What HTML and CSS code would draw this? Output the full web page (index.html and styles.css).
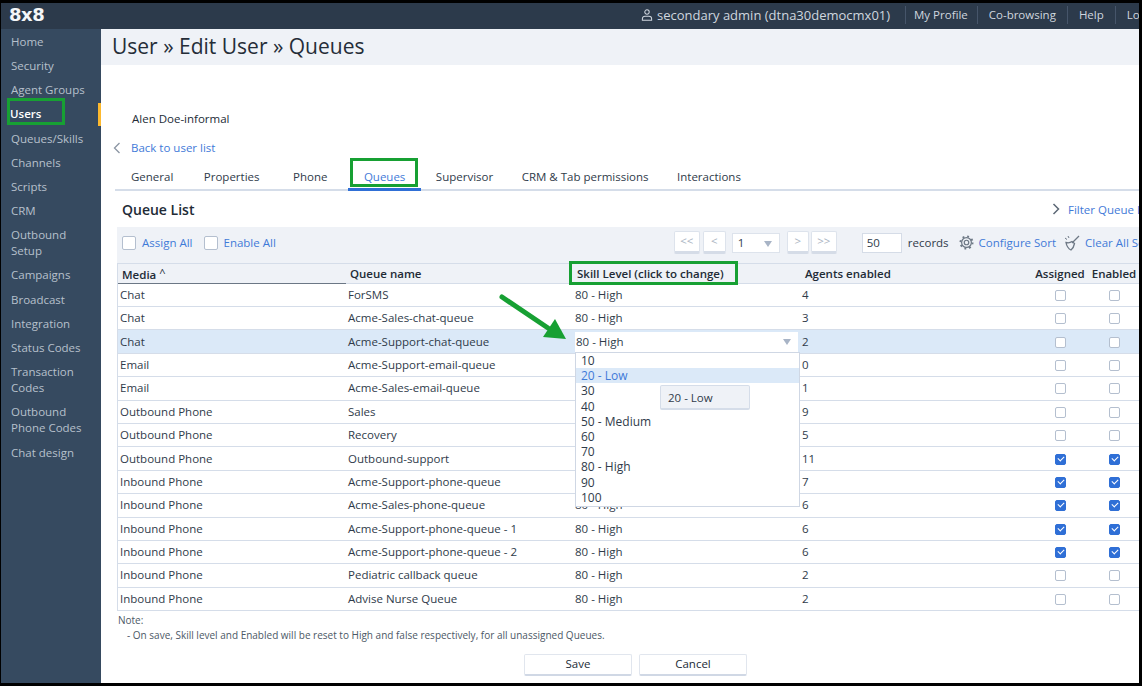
FILE: index.html
```html
<!DOCTYPE html>
<html lang="en">
<head>
  <meta charset="UTF-8" />
  <title>User » Edit User » Queues</title>
  <link rel="stylesheet" href="styles.css">
</head>
<body>
<div class="frame">
  <header class="topbar">
    <div class="logo">8x8</div>
    <div class="user">
      <svg class="user-icon" viewBox="0 0 14 14" width="12" height="14"><circle cx="7" cy="3.600" r="2.600" fill="none" stroke="#cfd6df" stroke-width="1.200"/><path d="M1.600 13v-1.600c0-1.800 1.400-3 3-3h4.800c1.600 0 3 1.200 3 3V13z" fill="none" stroke="#cfd6df" stroke-width="1.200"/></svg>
      <span>secondary admin (dtna30democmx01)</span>
    </div>
    <nav class="toplinks">
      <a>My Profile</a>
      <a>Co-browsing</a>
      <a>Help</a>
      <a>Logout</a>
    </nav>
  </header>

  <div class="layout">
    <aside class="sidebar">
      <a>Home</a>
      <a>Security</a>
      <a>Agent Groups</a>
      <a class="current">Users</a>
      <a>Queues/Skills</a>
      <a>Channels</a>
      <a>Scripts</a>
      <a>CRM</a>
      <a>Outbound<br>Setup</a>
      <a>Campaigns</a>
      <a>Broadcast</a>
      <a>Integration</a>
      <a>Status Codes</a>
      <a>Transaction<br>Codes</a>
      <a>Outbound<br>Phone Codes</a>
      <a>Chat design</a>
    </aside>

    <main class="content">
      <h1 class="page-title">User » Edit User » Queues</h1>
      <div class="user-name">Alen Doe-informal</div>
      <div class="back-row">
        <svg viewBox="0 0 8 12" width="8" height="12"><path d="M6.500 1 1.500 6l5 5" fill="none" stroke="#8b95a3" stroke-width="1.300"/></svg>
        <a class="link">Back to user list</a>
      </div>

      <div class="tabs">
        <a class="tab">General</a>
        <a class="tab">Properties</a>
        <a class="tab">Phone</a>
        <a class="tab active">Queues</a>
        <a class="tab">Supervisor</a>
        <a class="tab">CRM &amp; Tab permissions</a>
        <a class="tab">Interactions</a>
      </div>

      <div class="list-head">
        <h2>Queue List</h2>
        <div class="filter">
          <svg viewBox="0 0 8 12" width="8" height="12"><path d="M1.500 1l5 5-5 5" fill="none" stroke="#5d6876" stroke-width="1.500"/></svg>
          <a class="link">Filter Queue List</a>
        </div>
      </div>

      <div class="toolbar">
        <label class="check-all"><span class="box"></span><a class="link">Assign All</a></label>
        <label class="check-all"><span class="box"></span><a class="link">Enable All</a></label>
        <div class="pager">
          <span class="page-btn wide">&lt;&lt;</span>
          <span class="page-btn">&lt;</span>
          <span class="page-select">1<i class="caret"></i></span>
          <span class="page-btn next">&gt;</span>
          <span class="page-btn wide">&gt;&gt;</span>
        </div>
        <span class="records-input">50</span>
        <span class="records-label">records</span>
        <svg class="tool-icon" viewBox="0 0 16 16" width="15" height="15"><circle cx="8" cy="8" r="2.400" fill="none" stroke="#6d7885" stroke-width="1.300"/><circle cx="8" cy="8" r="5.200" fill="none" stroke="#6d7885" stroke-width="1.300"/><circle cx="8" cy="8" r="6.500" fill="none" stroke="#6d7885" stroke-width="2" stroke-dasharray="2 3.100"/></svg>
        <a class="link tool-link">Configure Sort</a>
        <svg class="tool-icon broom" viewBox="0 0 16 16" width="16" height="16"><path d="M15 1 8 8" stroke="#6d7885" stroke-width="1.300"/><path d="M8 6.500c-2 1.500-4 1.500-6 1 .5 3 2 6 5 7.500 2-1.500 3-4 3.500-6.500z" fill="none" stroke="#6d7885" stroke-width="1.300"/><path d="M1 3l2 1.500M4 1l1 2" stroke="#6d7885" stroke-width="1"/></svg>
        <a class="link tool-link">Clear All Sort</a>
      </div>

      <div class="grid-table">
        <div class="row head">
          <div class="cell sorted">Media <small>^</small></div>
          <div class="cell">Queue name</div>
          <div class="cell">Skill Level (click to change)</div>
          <div class="cell">Agents enabled</div>
          <div class="cell center">Assigned</div>
          <div class="cell center">Enabled</div>
        </div>
        <div class="row"><div class="cell">Chat</div><div class="cell">ForSMS</div><div class="cell">80 - High</div><div class="cell">4</div><div class="cell center"><span class="box"></span></div><div class="cell center"><span class="box"></span></div></div>
        <div class="row"><div class="cell">Chat</div><div class="cell">Acme-Sales-chat-queue</div><div class="cell">80 - High</div><div class="cell">3</div><div class="cell center"><span class="box"></span></div><div class="cell center"><span class="box"></span></div></div>
        <div class="row selected"><div class="cell">Chat</div><div class="cell">Acme-Support-chat-queue</div><div class="cell"><span class="skill-select">80 - High<i class="caret"></i></span></div><div class="cell">2</div><div class="cell center"><span class="box"></span></div><div class="cell center"><span class="box"></span></div></div>
        <div class="row"><div class="cell">Email</div><div class="cell">Acme-Support-email-queue</div><div class="cell"></div><div class="cell">0</div><div class="cell center"><span class="box"></span></div><div class="cell center"><span class="box"></span></div></div>
        <div class="row"><div class="cell">Email</div><div class="cell">Acme-Sales-email-queue</div><div class="cell"></div><div class="cell">1</div><div class="cell center"><span class="box"></span></div><div class="cell center"><span class="box"></span></div></div>
        <div class="row"><div class="cell">Outbound Phone</div><div class="cell">Sales</div><div class="cell"></div><div class="cell">9</div><div class="cell center"><span class="box"></span></div><div class="cell center"><span class="box"></span></div></div>
        <div class="row"><div class="cell">Outbound Phone</div><div class="cell">Recovery</div><div class="cell"></div><div class="cell">5</div><div class="cell center"><span class="box"></span></div><div class="cell center"><span class="box"></span></div></div>
        <div class="row"><div class="cell">Outbound Phone</div><div class="cell">Outbound-support</div><div class="cell"></div><div class="cell">11</div><div class="cell center"><span class="box on"></span></div><div class="cell center"><span class="box on"></span></div></div>
        <div class="row"><div class="cell">Inbound Phone</div><div class="cell">Acme-Support-phone-queue</div><div class="cell"></div><div class="cell">7</div><div class="cell center"><span class="box on"></span></div><div class="cell center"><span class="box on"></span></div></div>
        <div class="row"><div class="cell">Inbound Phone</div><div class="cell">Acme-Sales-phone-queue</div><div class="cell">80 - High</div><div class="cell">6</div><div class="cell center"><span class="box on"></span></div><div class="cell center"><span class="box on"></span></div></div>
        <div class="row"><div class="cell">Inbound Phone</div><div class="cell">Acme-Support-phone-queue - 1</div><div class="cell">80 - High</div><div class="cell">6</div><div class="cell center"><span class="box on"></span></div><div class="cell center"><span class="box on"></span></div></div>
        <div class="row"><div class="cell">Inbound Phone</div><div class="cell">Acme-Support-phone-queue - 2</div><div class="cell">80 - High</div><div class="cell">6</div><div class="cell center"><span class="box on"></span></div><div class="cell center"><span class="box on"></span></div></div>
        <div class="row"><div class="cell">Inbound Phone</div><div class="cell">Pediatric callback queue</div><div class="cell">80 - High</div><div class="cell">2</div><div class="cell center"><span class="box"></span></div><div class="cell center"><span class="box"></span></div></div>
        <div class="row"><div class="cell">Inbound Phone</div><div class="cell">Advise Nurse Queue</div><div class="cell">80 - High</div><div class="cell">2</div><div class="cell center"><span class="box"></span></div><div class="cell center"><span class="box"></span></div></div>

        <!-- open dropdown -->
        <ul class="skill-menu">
          <li>10</li>
          <li class="hover">20 - Low</li>
          <li>30</li>
          <li>40</li>
          <li>50 - Medium</li>
          <li>60</li>
          <li>70</li>
          <li>80 - High</li>
          <li>90</li>
          <li>100</li>
        </ul>
        <div class="tip">20 - Low</div>
      </div>

      <div class="note">
        <div>Note:</div>
        <div class="note-line">- On save, Skill level and Enabled will be reset to High and false respectively, for all unassigned Queues.</div>
      </div>

      <div class="actions">
        <button class="btn">Save</button>
        <button class="btn">Cancel</button>
      </div>
    </main>
  </div>

  <!-- annotations drawn over the screenshot -->
  <div class="mark mark-users"></div>
  <div class="mark mark-queues"></div>
  <div class="mark mark-skill"></div>
  <svg class="arrow" viewBox="0 0 70 50" width="70" height="50">
    <path d="M4 5 50 36" stroke="#17a033" stroke-width="5" stroke-linecap="round"/>
    <path d="M45 45 68 47 57 27z" fill="#17a033"/>
  </svg>
</div>
</body>
</html>
```

FILE: styles.css
```css
* { box-sizing: border-box; }
html, body { margin: 0; padding: 0; }
body {
  background: #000;
  font-family: "Open Sans", "Noto Sans", sans-serif;
  font-size: 11.5px;
  color: #2f3b4a;
}
.frame {
  position: relative;
  width: 1142px;
  height: 686px;
  border: solid #000;
  border-width: 3px 3px 3px 1px;
  background: #fff;
  overflow: hidden;
  display: flex;
  flex-direction: column;
}

/* top bar */
.topbar {
  height: 26px;
  flex: none;
  padding-bottom: 3px;
  background: #2c3a4b;
  display: flex;
  align-items: center;
  color: #cfd6df;
}
.logo {
  width: 640px;
  flex: none;
  padding-left: 8px;
  color: #f4f6f8;
  font-family: "DejaVu Sans", sans-serif;
  font-weight: bold;
  font-size: 18px;
  letter-spacing: -0.5px;
}
.user {
  display: flex;
  align-items: center;
  gap: 4px;
  width: 264px;
  flex: none;
  font-size: 13px;
  white-space: nowrap;
}
.toplinks { display: flex; white-space: nowrap; }
.toplinks a { padding: 0 11px; border-left: 1px solid #46556a; line-height: 18px; }
.toplinks a:first-child { padding: 0 9px 0 8px; }

/* sidebar */
.layout { flex: 1; display: flex; min-height: 0; }
.sidebar {
  width: 100px;
  flex: none;
  background: #364a60;
  padding-top: 0.700px;
}
.sidebar a {
  display: block;
  position: relative;
  padding: 4.100px 0 4.100px 10px;
  line-height: 16px;
  color: #b7c0cc;
  font-size: 11.5px;
}
.sidebar a.current { color: #fff; font-weight: 600; padding-left: 9px; }
.sidebar a.current::after {
  content: "";
  position: absolute;
  right: 0;
  top: 1px;
  bottom: 0;
  width: 3px;
  background: #fdb92e;
}

/* main column */
.content { flex: 1; min-width: 0; overflow: hidden; }
.page-title {
  margin: 0;
  height: 36px;
  padding-left: 11px;
  background: #eff2f7;
  font-size: 21px;
  font-weight: normal;
  line-height: 34px;
  color: #252d38;
}
.link { color: #3f7ad8; }
.user-name { margin: 46px 0 0 31px; line-height: 16px; color: #222b36; }
.back-row {
  display: flex;
  align-items: center;
  gap: 10px;
  margin: 13px 0 0 12px;
  line-height: 16px;
}
.tabs {
  display: flex;
  margin: 8px 0 0 14px;
  height: 27px;
  border-bottom: 2px solid #d5dde9;
}
.tab { padding: 0 16px; line-height: 26px; height: 27px; white-space: nowrap; margin-right: -0.5px; }
.tab:nth-child(2) { margin-left: -1px; }
.tab:nth-child(3) { margin-left: 2px; }
.tab:nth-child(4) { margin-left: 5px; }
.tab:nth-child(5) { margin-left: -1px; }
.tab:nth-child(6), .tab:nth-child(7) { margin-left: -3px; }
.tab.active { color: #3f7ad8; border-bottom: 3px solid #2f6fd6; }

.list-head {
  height: 36px;
  display: flex;
  align-items: center;
  justify-content: space-between;
  padding-left: 21px;
}
.list-head h2 { margin: 0; font-size: 14px; font-weight: 600; color: #222b36; }
.filter {
  display: flex;
  align-items: center;
  gap: 8px;
  width: 87px;
  flex: none;
  white-space: nowrap;
}
.filter svg { flex: none; }

/* toolbar */
.toolbar {
  margin-left: 16px;
  height: 36px;
  width: 1040px;
  padding: 0 0 5px 5px;
  background: #eff2f7;
  display: flex;
  align-items: center;
  white-space: nowrap;
}
.check-all { display: flex; align-items: center; gap: 6px; margin-right: 8px; }
.check-all:first-child { margin-right: 11px; }
.check-all .box { width: 14px; height: 14px; }
.box {
  display: inline-block;
  width: 11px;
  height: 11px;
  border: 1px solid #b4bfcf;
  border-radius: 2px;
  background: #fff;
}
.box.on {
  position: relative;
  background: #2f6fd6;
  border-color: #2f6fd6;
}
.box.on::after {
  content: "";
  position: absolute;
  left: 2px;
  top: 1px;
  width: 5px;
  height: 3px;
  border: solid #fff;
  border-width: 0 0 1.500px 1.500px;
  transform: rotate(-45deg);
}
.pager { display: flex; align-items: center; gap: 3px; margin-left: 390px; }
.page-btn {
  width: 23px;
  height: 23px;
  background: #fff;
  border: 1px solid #dde3ec;
  border-bottom: 3px solid #d5dce7;
  border-radius: 2px;
  color: #aab4c2;
  text-align: center;
  line-height: 18px;
}
.page-btn.wide { width: 26px; }
.page-btn.next { width: 22px; margin-right: -1px; }
.page-select {
  position: relative;
  width: 48px;
  height: 20px;
  background: #fff;
  border: 1px solid #dde3ec;
  line-height: 18px;
  padding-left: 5px;
  margin: 0 4px 0 3px;
}
.caret {
  position: absolute;
  right: 7px;
  top: 7px;
  border: 4px solid transparent;
  border-top: 6px solid #a8b4c6;
  border-bottom: 0;
}
.records-input {
  width: 40px;
  height: 20px;
  margin-left: 25px;
  background: #fff;
  border: 1px solid #d5dce7;
  line-height: 18px;
  padding-left: 4px;
}
.records-label { margin-left: 6px; }
.tool-icon { margin: 0 5px 0 10px; flex: none; }
.broom { margin-left: 8px; }

/* queue table */
.grid-table {
  position: relative;
  margin-left: 16px;
  width: 1040px;
  border-left: 1px solid #d5dde9;
}
.row {
  display: grid;
  grid-template-columns: 228px 227px 227px 233px 54px 54px;
  height: 23.400px;
  border-bottom: 1px solid #d5dde9;
  align-items: center;
  white-space: nowrap;
}
.row.head {
  height: 20.600px;
  background: #eff2f7;
  border-top: 1px solid #d5dde9;
  font-weight: 600;
  color: #222b36;
}
.row.selected { background: #dbe9f8; }
.cell { padding-left: 2px; line-height: 16px; }
.row.head .cell { padding: 0 0 1px 4px; }
.row.head .cell:nth-child(4) { padding-left: 5px; }
.row.head .cell.sorted { height: 20px; line-height: 18px; border-bottom: 1px solid #6b7785; }
.cell small { font-size: 11px; font-weight: normal; vertical-align: 2px; }
.cell.center { padding: 0; text-align: center; }
.row.head .cell.center { padding: 0 0 1px; }
.cell .box { vertical-align: -2px; }

.skill-select {
  position: relative;
  display: block;
  width: 223px;
  height: 20px;
  padding-left: 1px;
  background: #fff;
  line-height: 20px;
}
.skill-menu {
  position: absolute;
  left: 457px;
  top: 89px;
  width: 225px;
  margin: 0;
  padding: 0 0 1px;
  list-style: none;
  background: #fff;
  border: 1px solid #cfd7e4;
}
.skill-menu li { height: 15.200px; line-height: 15px; padding-left: 5px; font-size: 12px; }
.skill-menu li.hover { background: #dbe9f8; color: #3f7ad8; }
.tip {
  position: absolute;
  left: 542px;
  top: 122px;
  width: 90px;
  height: 25px;
  padding-left: 7px;
  line-height: 23px;
  background: #eff2f7;
  border: 1px solid #d5dde9;
  border-bottom-width: 2px;
  border-radius: 2px;
}

/* footer */
.note { margin: 2px 0 0 17px; font-size: 10px; color: #4c5866; line-height: 15px; }
.note-line { padding-left: 9px; }
.actions { display: flex; gap: 7px; margin: 11px 0 0 423px; }
.btn {
  width: 108px;
  height: 22px;
  padding: 0 0 2px;
  background: #fff;
  border: 1px solid #e1e6ee;
  border-bottom: 2px solid #d0d8e5;
  border-radius: 2px;
  font: inherit;
  color: #222b36;
}

/* green annotations */
.mark { position: absolute; border: 3px solid #17a033; }
.mark-users { left: 6px; top: 95px; width: 58px; height: 27px; }
.mark-queues { left: 349px; top: 155px; width: 68px; height: 29px; }
.mark-skill { left: 568px; top: 258px; width: 169px; height: 24px; }
.arrow { position: absolute; left: 497px; top: 289px; }
```
